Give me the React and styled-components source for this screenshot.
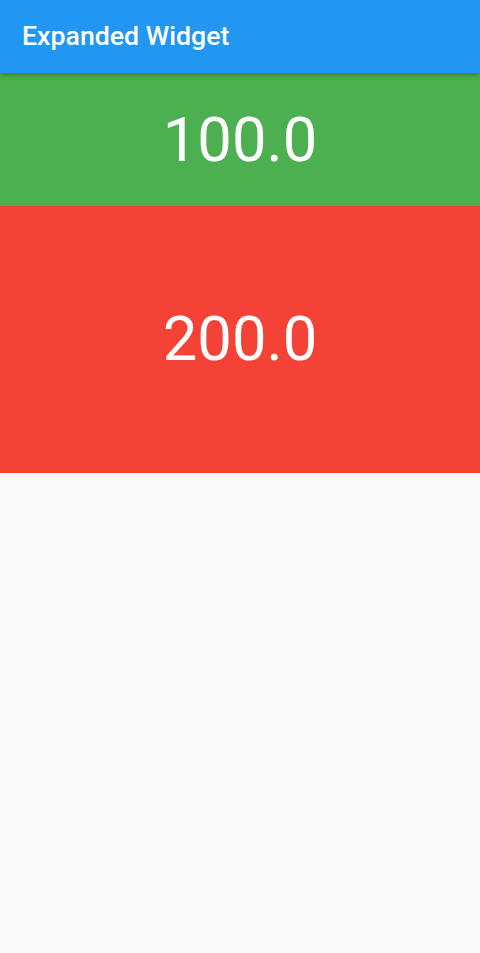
import React from "react";
import styled, { createGlobalStyle } from "styled-components";

const Global = createGlobalStyle`
  html, body { margin: 0; padding: 0; }
  body { background: #faf8fb; font-family: Roboto, "Noto Sans", sans-serif; }
`;

const Page = styled.div`
  display: flex;
  flex-direction: column;
  height: 953px;
  background: #faf8fb;
`;

const AppBar = styled.header`
  height: 73px;
  flex: none;
  background: #2196f3;
  display: flex;
  align-items: center;
  padding: 0 22px;
  box-shadow: 0 2px 5px rgba(0, 0, 0, 0.28);
  position: relative;
  z-index: 1;
`;

const Title = styled.h1`
  margin: 0;
  color: #fff;
  font-size: 26.7px;
  font-weight: 500;
  line-height: 1;
  padding-bottom: 1px;
`;

const Block = styled.div`
  height: ${(p) => p.$h}px;
  flex: none;
  background: ${(p) => p.$bg};
  display: flex;
  align-items: center;
  justify-content: center;
  color: #fff;
  font-size: 61.5px;
  font-weight: 400;
  line-height: 1;
  padding-top: ${(p) => p.$pt || 0}px;
  box-sizing: border-box;
`;

export default function App() {
  return (
    <>
      <Global />
      <Page>
        <AppBar>
          <Title>Expanded Widget</Title>
        </AppBar>
        <Block $h={133} $bg="#4caf50" $pt={3}>100.0</Block>
        <Block $h={267} $bg="#f44336" $pt={0}>200.0</Block>
      </Page>
    </>
  );
}
